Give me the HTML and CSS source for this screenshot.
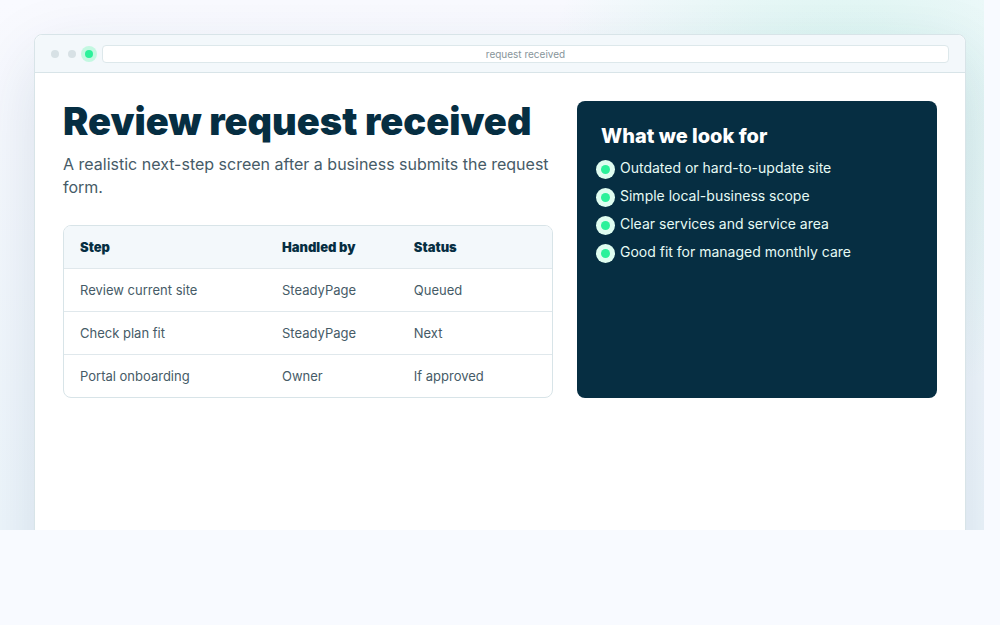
FILE: index.html
```html
<!DOCTYPE html>
<html lang="en">
<head>
    <meta charset="UTF-8">
    <meta name="viewport" content="width=device-width, initial-scale=1.0">
    <title>Review request received</title>
    <link rel="stylesheet" href="styles.css">
</head>
<body>
    <div class="stage">
        <div class="window">
            <div class="window-bar">
                <span class="dot"></span>
                <span class="dot"></span>
                <span class="dot dot-active"></span>
                <input class="address" type="text" value="request received" aria-label="Address" readonly>
            </div>
            <main class="content">
                <section class="request">
                    <h1>Review request received</h1>
                    <p class="lead">A realistic next-step screen after a business submits the request form.</p>
                    <div class="table-card">
                        <table>
                            <thead>
                                <tr>
                                    <th class="col-step" scope="col">Step</th>
                                    <th class="col-owner" scope="col">Handled by</th>
                                    <th scope="col">Status</th>
                                </tr>
                            </thead>
                            <tbody>
                                <tr><td>Review current site</td><td>SteadyPage</td><td>Queued</td></tr>
                                <tr><td>Check plan fit</td><td>SteadyPage</td><td>Next</td></tr>
                                <tr><td>Portal onboarding</td><td>Owner</td><td>If approved</td></tr>
                            </tbody>
                        </table>
                    </div>
                </section>
                <aside class="panel">
                    <h2>What we look for</h2>
                    <ul>
                        <li>Outdated or hard-to-update site</li>
                        <li>Simple local-business scope</li>
                        <li>Clear services and service area</li>
                        <li>Good fit for managed monthly care</li>
                    </ul>
                </aside>
            </main>
        </div>
    </div>
</body>
</html>
```
FILE: styles.css
```css
* {
    box-sizing: border-box;
}
body {
    margin: 0;
    background: #f8faff;
    color: #062e42;
    font-family: Inter, "Liberation Sans", sans-serif;
}
h1, h2, p, ul {
    margin: 0;
    padding: 0;
}
.stage {
    margin-right: 16px;
    padding: 34px 18px 0 34px;
    overflow: hidden;
    background:
        radial-gradient(circle at 86% 20%, rgba(44, 220, 160, 0.16), transparent 32%),
        linear-gradient(180deg, #f9faff 0%, #eef6fc 100%);
}

/* the window runs past the lower edge of the stage */
.window {
    margin-bottom: -90px;
    border: 1px solid #d8e4e8;
    border-radius: 8px;
    background: #fff;
    box-shadow: 0 24px 70px rgba(6, 46, 86, 0.13);
}
.window-bar {
    display: flex;
    align-items: center;
    gap: 9px;
    height: 38px;
    padding: 0 16px;
    background: #f3f8fb;
    border-bottom: 1px solid #d8e4e8;
    border-radius: 8px 8px 0 0;
}
.dot {
    width: 8px;
    height: 8px;
    border-radius: 50%;
    background: #d7e1e5;
}
.dot-active {
    background: #2cf19a;
    box-shadow: 0 0 0 4px #c3f8e1;
}
.address {
    flex: 1;
    min-width: 0;
    height: 18px;
    padding: 0;
    border: 1px solid #dde8eb;
    border-radius: 4px;
    background: #fff;
    color: #87959a;
    font-family: inherit;
    font-size: 10px;
    text-align: center;
}

.content {
    display: grid;
    grid-template-columns: 49fr 36fr;
    gap: 24px;
    padding: 28px 28px 221px;
}
h1 {
    font-size: 38px;
    line-height: 40px;
    font-weight: 900;
}
.lead {
    margin-top: 12px;
    color: #465b67;
    font-size: 16px;
    line-height: 23px;
}
.table-card {
    margin-top: 26px;
    border: 1px solid #d8e4e8;
    border-radius: 8px;
    overflow: hidden;
}
table {
    width: 100%;
    border-collapse: collapse;
    table-layout: fixed;
    font-size: 13px;
    line-height: 18px;
}
th, td {
    padding: 12px 16px;
    text-align: left;
}
th {
    background: #f3f8fb;
    font-weight: 900;
}
td {
    border-top: 1px solid #e0e8ec;
    color: #465b67;
}
.col-step {
    width: 41.4%;
}
.col-owner {
    width: 27%;
}

.panel {
    padding: 24px;
    border-radius: 8px;
    background: #062e42;
    color: #fff;
}
h2 {
    font-size: 20px;
    line-height: 22px;
    font-weight: 800;
}
ul {
    display: grid;
    gap: 8px;
    margin-top: 11px;
    list-style: none;
}
li {
    display: flex;
    align-items: center;
    gap: 10px;
    color: #e6fbf5;
    font-size: 14px;
    line-height: 20px;
}
li::before {
    content: "";
    width: 9px;
    height: 9px;
    margin-top: 2px;
    border-radius: 50%;
    background: #2cf19a;
    box-shadow: 0 0 0 5px #dffdf0;
}
```
